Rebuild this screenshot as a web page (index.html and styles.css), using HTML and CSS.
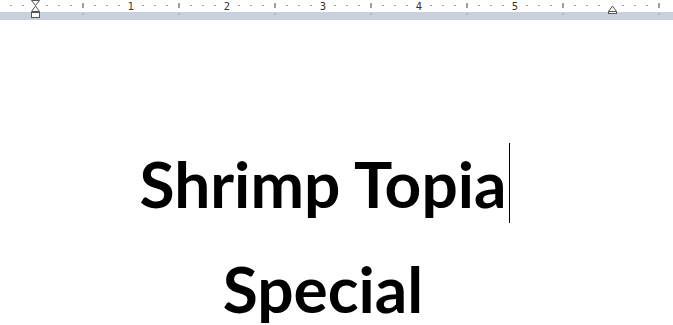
FILE: index.html
```html
<!DOCTYPE html>
<html>
<head>
    <meta charset="UTF-8">
    <link rel="stylesheet" href="styles.css">
</head>
<body>
    <div class="ruler">
        <svg class="ruler-svg" width="673" height="20" viewBox="0 0 673 20" id="rulerSvg">
            <rect x="0" y="12" width="673" height="8" fill="#c8d1dd"/>
            <g id="marks"></g>
            <g class="nums" font-family="DejaVu Sans, sans-serif" font-size="10" fill="#333" text-anchor="middle">
                <text x="131" y="9.5">1</text>
                <text x="227" y="9.5">2</text>
                <text x="323" y="9.5">3</text>
                <text x="419" y="9.5">4</text>
                <text x="515" y="9.5">5</text>
            </g>
            <!-- left indent markers -->
            <path d="M31.5 0.5 H39.5 L35.5 5.5 Z" fill="#fff" stroke="#555"/>
            <path d="M35.5 6 L39.5 11.5 H31.5 Z" fill="#fff" stroke="#555"/>
            <rect x="31.5" y="12.5" width="8" height="5" fill="#fff" stroke="#555"/>
            <!-- right indent marker -->
            <path d="M612.5 6 L616.5 11.5 H608.5 Z" fill="#fff" stroke="#555"/>
            <rect x="608.5" y="11.5" width="8" height="2" fill="#fff" stroke="#555"/>
        </svg>
    </div>

    <main class="page">
        <div class="column">
            <p class="line">Shrimp Topia<span class="caret"></span></p>
            <p class="line">Special</p>
        </div>
    </main>

    <script>
        // ruler ticks: every 1/8 inch (12px), origin at x=35
        const marks = document.getElementById('marks');
        const ns = 'http://www.w3.org/2000/svg';
        for (let i = -3; i <= 52; i++) {
            const x = 35 + i * 12;
            if (x < 0 || x > 673) continue;
            if (i % 8 === 0) continue; // numbers / origin
            let el;
            if (i % 4 === 0) {
                el = document.createElementNS(ns, 'rect');
                el.setAttribute('x', x - 0.5);
                el.setAttribute('y', 3);
                el.setAttribute('width', 1);
                el.setAttribute('height', 5);
                el.setAttribute('fill', '#444');
                const t = document.createElementNS(ns, 'rect');
                t.setAttribute('x', x - 0.5);
                t.setAttribute('y', 13);
                t.setAttribute('width', 1);
                t.setAttribute('height', 2);
                t.setAttribute('fill', '#98a2b0');
                marks.appendChild(t);
            } else {
                el = document.createElementNS(ns, 'rect');
                el.setAttribute('x', x - 0.5);
                el.setAttribute('y', 5);
                el.setAttribute('width', 1);
                el.setAttribute('height', 1);
                el.setAttribute('fill', '#444');
            }
            marks.appendChild(el);
        }
    </script>
</body>
</html>
```

FILE: styles.css
```css
* {
    margin: 0;
    padding: 0;
    box-sizing: border-box;
}

body {
    width: 673px;
    height: 325px;
    overflow: hidden;
    background: #fff;
}

.ruler {
    height: 20px;
    background: #fff;
}

.ruler-svg {
    display: block;
}

.page {
    padding-left: 35px;
}

.column {
    width: 576px;
    padding-top: 111px;
}

.line {
    font-family: Lato, 'Open Sans', sans-serif;
    font-weight: bold;
    font-size: 64px;
    line-height: 105px;
    color: #000;
    text-align: center;
    white-space: nowrap;
}

.caret {
    display: inline-block;
    width: 1px;
    height: 80px;
    margin-left: 3px;
    margin-right: -4px;
    background: #000;
    vertical-align: -15px;
}
```
